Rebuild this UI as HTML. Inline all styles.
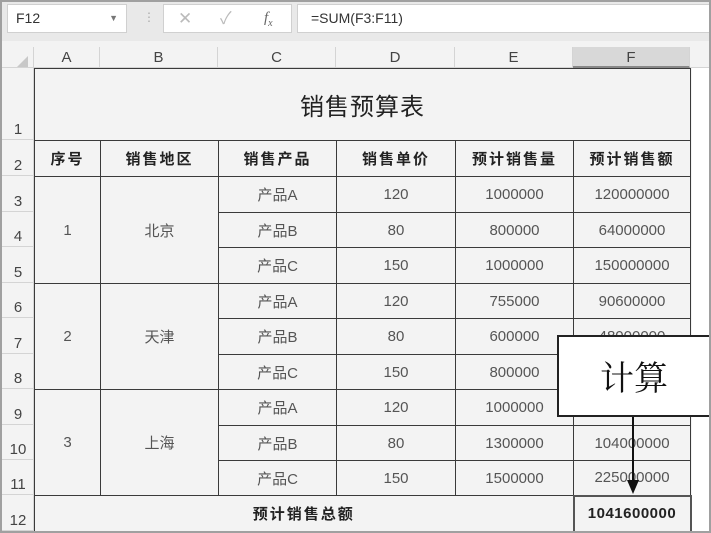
<!DOCTYPE html><html><head><meta charset="utf-8"><style>
*{margin:0;padding:0;box-sizing:border-box}
body{width:711px;height:533px;overflow:hidden;background:#fff;font-family:"Liberation Sans","Noto Sans CJK SC",sans-serif;position:relative;color:#333}
#frame{position:absolute;left:0;top:0;width:711px;height:533px;border:2px solid #a0a0a0;border-top:none;z-index:9;pointer-events:none}
#fb{position:absolute;left:0;top:0;width:711px;height:41px;background:#e9e9e9;border-top:2px solid #a0a0a0}
.box{position:absolute;background:#fff;border:1px solid #d0d0d0;font-size:14px;color:#333}
#hdr{position:absolute;left:0;top:41px;width:711px;height:27px;background:#f3f3f3;border-bottom:1px solid #d4d4d4}
.ch{position:absolute;top:47px;height:21px;font-size:15px;color:#444;text-align:center;line-height:21px;border-right:1px solid #d4d4d4}
table{position:absolute;left:34px;top:68px;border-collapse:collapse;background:#f3f3f3}
td{border:1px solid #3a3a3a;text-align:center;font-size:15px;color:#555;padding:0}
.h td{font-weight:bold;color:#222;font-size:15px;letter-spacing:2px}
.rn{position:absolute;left:2px;width:32px;font-size:15px;color:#444;text-align:center;background:#f3f3f3;border-bottom:1px solid #d4d4d4;border-right:1px solid #d4d4d4}
.rn span{position:absolute;bottom:0;left:0;width:32px;line-height:18px}
</style></head><body>
<div id="fb"></div>
<div class="box" style="left:7px;top:4px;width:120px;height:29px;line-height:27px;padding-left:8px">F12<span style="position:absolute;right:8px;top:0;font-size:9px;color:#777">▼</span></div>
<div style="position:absolute;left:143px;top:10px;color:#aaa;font-size:12px">⋮</div>
<div class="box" style="left:163px;top:4px;width:129px;height:29px;color:#bbb;font-size:17px;line-height:27px"><span style="position:absolute;left:14px">✕</span><span style="position:absolute;left:56px">✓</span><span style="position:absolute;left:100px;color:#666;font-family:'Liberation Serif',serif;font-style:italic;font-size:15px">f<sub style="font-size:10px">x</sub></span></div>
<div class="box" style="left:297px;top:4px;width:414px;height:29px;line-height:27px;padding-left:13px;border-right:none">=SUM(F3:F11)</div>
<div id="hdr"></div>
<div style="position:absolute;left:17px;top:56px;width:0;height:0;border-left:11px solid transparent;border-bottom:11px solid #c8c8c8"></div>
<div class="ch" style="left:34px;width:66px">A</div>
<div class="ch" style="left:100px;width:118px">B</div>
<div class="ch" style="left:218px;width:118px">C</div>
<div class="ch" style="left:336px;width:119px">D</div>
<div class="ch" style="left:455px;width:118px">E</div>
<div class="ch" style="left:573px;width:117px;background:#d8d8d8;border-bottom:2px solid #888">F</div>
<div style="position:absolute;left:33px;top:47px;width:1px;height:21px;background:#d4d4d4"></div>
<div class="rn" style="top:68px;height:72px"><span>1</span></div>
<div class="rn" style="top:140px;height:36px"><span>2</span></div>
<div class="rn" style="top:176px;height:36px"><span>3</span></div>
<div class="rn" style="top:212px;height:35px"><span>4</span></div>
<div class="rn" style="top:247px;height:36px"><span>5</span></div>
<div class="rn" style="top:283px;height:35px"><span>6</span></div>
<div class="rn" style="top:318px;height:36px"><span>7</span></div>
<div class="rn" style="top:354px;height:35px"><span>8</span></div>
<div class="rn" style="top:389px;height:36px"><span>9</span></div>
<div class="rn" style="top:425px;height:35px"><span>10</span></div>
<div class="rn" style="top:460px;height:35px"><span>11</span></div>
<div class="rn" style="top:495px;height:36px"><span>12</span></div>
<div style="position:absolute;left:690px;top:68px;width:21px;height:465px;background:#fff"></div>
<table>
<colgroup><col style="width:66px"><col style="width:118px"><col style="width:118px"><col style="width:119px"><col style="width:118px"><col style="width:117px"></colgroup>
<tr style="height:72px"><td colspan="6" style="font-size:24px;color:#222;letter-spacing:1px">销售预算表</td></tr>
<tr class="h" style="height:36px"><td>序号</td><td>销售地区</td><td>销售产品</td><td>销售单价</td><td>预计销售量</td><td>预计销售额</td></tr>
<tr style="height:36px"><td rowspan="3">1</td><td rowspan="3">北京</td><td>产品A</td><td>120</td><td>1000000</td><td>120000000</td></tr>
<tr style="height:35px"><td>产品B</td><td>80</td><td>800000</td><td>64000000</td></tr>
<tr style="height:36px"><td>产品C</td><td>150</td><td>1000000</td><td>150000000</td></tr>
<tr style="height:35px"><td rowspan="3">2</td><td rowspan="3">天津</td><td>产品A</td><td>120</td><td>755000</td><td>90600000</td></tr>
<tr style="height:36px"><td>产品B</td><td>80</td><td>600000</td><td>48000000</td></tr>
<tr style="height:35px"><td>产品C</td><td>150</td><td>800000</td><td>120000000</td></tr>
<tr style="height:36px"><td rowspan="3">3</td><td rowspan="3">上海</td><td>产品A</td><td>120</td><td>1000000</td><td>120000000</td></tr>
<tr style="height:35px"><td>产品B</td><td>80</td><td>1300000</td><td>104000000</td></tr>
<tr style="height:35px"><td>产品C</td><td>150</td><td>1500000</td><td>225000000</td></tr>
<tr class="h" style="height:36px"><td colspan="5">预计销售总额</td><td style="border:2px solid #555;letter-spacing:0.5px">1041600000</td></tr>
</table>
<div style="position:absolute;left:557px;top:335px;width:154px;height:82px;background:#fff;border:2px solid #222;font-size:34px;color:#111;text-align:center;line-height:78px;font-family:'Noto Serif CJK SC',serif">计算</div>
<div style="position:absolute;left:632px;top:417px;width:2px;height:66px;background:#111"></div>
<div style="position:absolute;left:627px;top:480px;width:0;height:0;border-left:6px solid transparent;border-right:6px solid transparent;border-top:14px solid #111"></div>
<div id="frame"></div>
</body></html>
